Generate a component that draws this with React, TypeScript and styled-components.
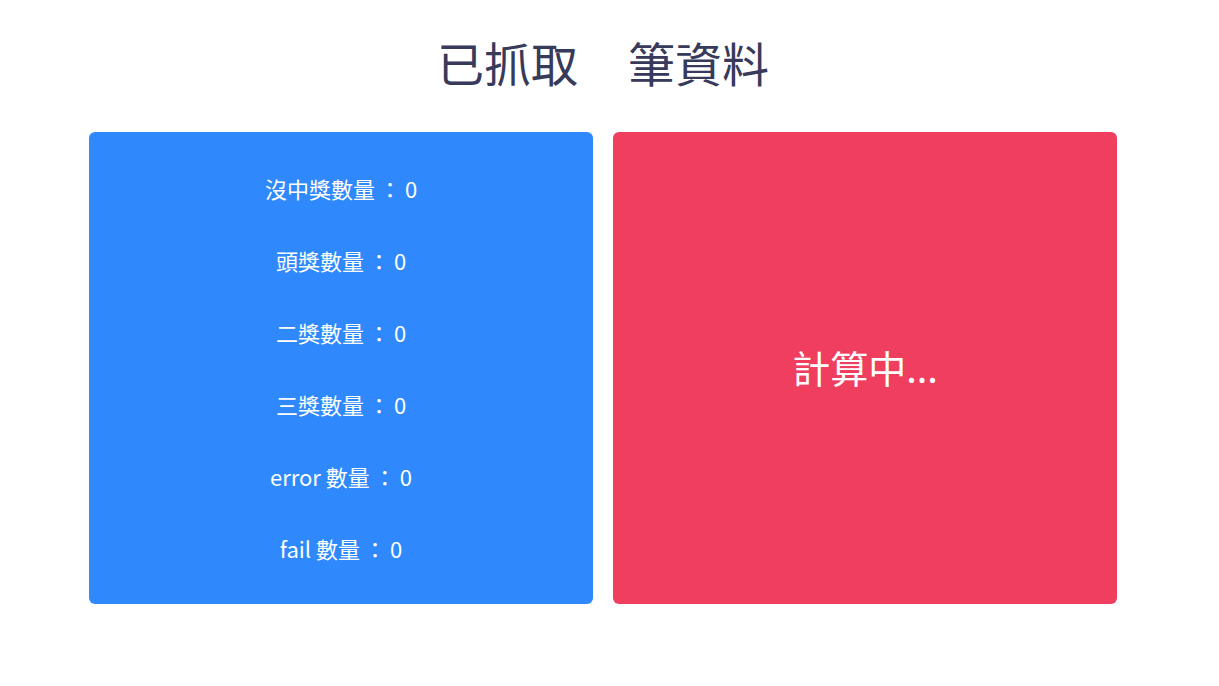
import React from "react";
import styled, { createGlobalStyle } from "styled-components";

const GlobalStyle = createGlobalStyle`
  html, body {
    margin: 0;
    padding: 0;
    background: #ffffff;
  }
  body {
    font-family: "Noto Sans CJK TC", "Noto Sans", sans-serif;
  }
`;

const Page = styled.div`
  width: 1206px;
  display: flex;
  flex-direction: column;
  align-items: center;
`;

const Title = styled.h1`
  margin: 26px 0 0 0;
  font-size: 47px;
  font-weight: 400;
  line-height: 72px;
  color: #373a5a;
  white-space: pre;
`;

const Count = styled.span`
  display: inline-block;
  width: 50px;
`;

const Cards = styled.div`
  display: grid;
  grid-template-columns: 504px 504px;
  gap: 20px;
  margin-top: 34px;
`;

const Card = styled.div<{ $color: string }>`
  height: 472px;
  box-sizing: border-box;
  border-radius: 6px;
  background: ${(p) => p.$color};
  color: #ffffff;
  display: flex;
  flex-direction: column;
  align-items: center;
  justify-content: center;
`;

const StatRow = styled.div`
  height: 72px;
  display: flex;
  align-items: center;
  justify-content: center;
  font-size: 22px;
`;

const Colon = styled.span`
  margin: 0 4px;
`;

const Loading = styled.div`
  font-size: 38px;
  margin-bottom: 4px;
`;

const stats = [
  { label: "沒中獎數量", value: 0 },
  { label: "頭獎數量", value: 0 },
  { label: "二獎數量", value: 0 },
  { label: "三獎數量", value: 0 },
  { label: "error 數量", value: 0 },
  { label: "fail 數量", value: 0 },
];

const App = () => {
  return (
    <>
      <GlobalStyle />
      <Page lang="zh-Hant">
        <Title>
          已抓取<Count />筆資料
        </Title>
        <Cards>
          <Card $color="#2f89fd">
            {stats.map((s) => (
              <StatRow key={s.label}>
                {s.label}
                <Colon>：</Colon>
                {s.value}
              </StatRow>
            ))}
          </Card>
          <Card $color="#f03e5f">
            <Loading>計算中...</Loading>
          </Card>
        </Cards>
      </Page>
    </>
  );
};

export default App;
